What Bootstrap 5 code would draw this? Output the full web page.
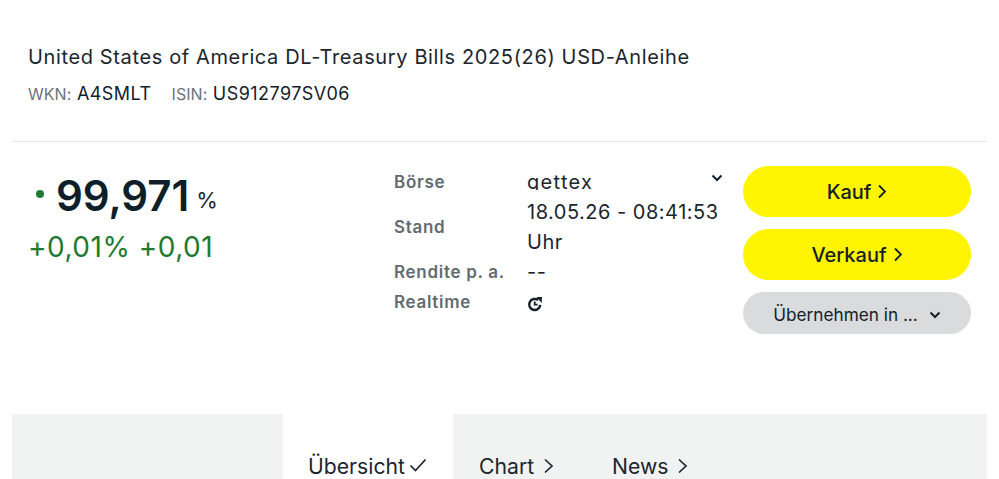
<!DOCTYPE html>
<html lang="de">
<head>
<meta charset="utf-8">
<title>USD-Anleihe</title>
<link href="https://cdn.jsdelivr.net/npm/bootstrap@5.3.0/dist/css/bootstrap.min.css" rel="stylesheet">
<style>
html,body{height:479px;overflow:hidden;background:#fff}
body{font-family:Inter,"Liberation Sans",sans-serif;color:#14212b;font-size:20px}
.shell{padding:0 12px}
.head{padding:43px 16px 0;height:142px;border-bottom:1px solid #e6e8e8}
.title{font-size:20px;line-height:28px;letter-spacing:.63px;margin:0;font-weight:400;color:#1c262d}
.ids{margin-top:10px;line-height:26px;font-size:18px;letter-spacing:.45px}
.ids .lbl{font-size:16px;color:#6d7478;letter-spacing:.05px}
.ids .pair{margin-right:20px}
.quote{height:272px}
.pricecol{width:382px;padding:34px 0 0 16px}
.pricerow{height:40px}
.dot{width:8px;height:8px;border-radius:50%;background:#217a2f;margin:0 12px 4px 8px}
.price{font-size:42px;font-weight:600;line-height:40px;letter-spacing:-.05px;color:#0f1f29}
.unit{font-size:22px;margin:8px 0 0 7px;color:#1c262d}
.delta{font-size:28px;line-height:36px;color:#217a2f;margin-top:13px;letter-spacing:.5px}
.metacol{width:349px;padding-top:25px}
.mrow{display:flex;align-items:center}
.mlabel{width:133px;font-size:17px;font-weight:600;color:#626b70;padding-top:2px;letter-spacing:.7px}
.mval{width:197px;font-size:20px;line-height:30px;color:#1c262d;letter-spacing:.5px}
.rb{height:30px}
.sel{height:23px;overflow:hidden;position:relative;align-self:flex-start;letter-spacing:1.3px}
.sel svg{position:absolute;right:1px;top:7px}
.rt{padding-top:3px}
.actions{width:228px;padding-top:24px}
.pill{display:flex;align-items:center;justify-content:center;border-radius:26px;border:0;width:100%;color:#14212b;padding:0}
.buy{height:51px;background:#fff500;font-size:20px;font-weight:500;margin-bottom:12px}
.buy svg{margin-left:6px}
.take{height:42px;background:#d9dbdd;font-size:17.2px;padding-top:3px}
.take svg{margin-left:11px}
.tabs{background:#f1f3f3;height:65px;padding-left:271px}
.tabon{width:170px;background:#fff;padding:37px 0 0 25px}
.tabitem{font-size:21.2px;line-height:30px;color:#1c262d}
.taboff{padding:37px 0 0 26px;width:133px}
.tabitem svg{margin-left:4px;vertical-align:2px}
.tabitem .gap8{margin-left:9px;vertical-align:0}
</style>
</head>
<body>
<div class="shell">
  <div class="head">
    <h1 class="title">United States of America DL-Treasury Bills 2025(26) USD-Anleihe</h1>
    <div class="ids"><span class="pair"><span class="lbl">WKN:</span> A4SMLT</span><span class="pair"><span class="lbl">ISIN:</span> US912797SV06</span></div>
  </div>
  <div class="quote d-flex">
    <div class="pricecol">
      <div class="pricerow d-flex align-items-center"><span class="dot"></span><span class="price">99,971</span><span class="unit">%</span></div>
      <div class="delta">+0,01% +0,01</div>
    </div>
    <div class="metacol">
      <div class="mrow rb"><div class="mlabel">Börse</div><div class="mval sel">gettex<svg width="12" height="8" viewBox="0 0 12 8"><path d="M1.5 1.5 6 6l4.5-4.5" fill="none" stroke="#14212b" stroke-width="2"/></svg></div></div>
      <div class="mrow"><div class="mlabel">Stand</div><div class="mval">18.05.26 - 08:41:53 Uhr</div></div>
      <div class="mrow rb"><div class="mlabel">Rendite p. a.</div><div class="mval">--</div></div>
      <div class="mrow rb"><div class="mlabel">Realtime</div><div class="mval rt d-flex align-items-center"><svg width="16" height="16" viewBox="0 0 16 16"><path d="M13.2 8.8a5.5 5.5 0 1 1-2.1-4.7" fill="none" stroke="#14212b" stroke-width="2.5"/><path d="M9.4 1 15 1l-.4 6z" fill="#14212b"/><path d="M7.7 5.4V8.7H10.6" fill="none" stroke="#14212b" stroke-width="1.8"/></svg></div></div>
    </div>
    <div class="actions">
      <button class="pill buy" type="button">Kauf<svg width="10" height="15" viewBox="0 0 10 15"><path d="M2 1.5 8 7.5l-6 6" fill="none" stroke="#14212b" stroke-width="1.8"/></svg></button>
      <button class="pill buy" type="button">Verkauf<svg width="10" height="15" viewBox="0 0 10 15"><path d="M2 1.5 8 7.5l-6 6" fill="none" stroke="#14212b" stroke-width="1.8"/></svg></button>
      <button class="pill take" type="button">Übernehmen in ...<svg width="12" height="8" viewBox="0 0 12 8"><path d="M1.5 1.5 6 6l4.5-4.5" fill="none" stroke="#14212b" stroke-width="2"/></svg></button>
    </div>
  </div>
  <div class="tabs d-flex">
    <div class="tabon tabitem">Übersicht<svg width="18" height="14" viewBox="0 0 18 14"><path d="M1.5 7.5 6.5 12.5 16.5 1.5" fill="none" stroke="#1c262d" stroke-width="1.7"/></svg></div>
    <div class="taboff tabitem">Chart<svg class="gap8" width="11" height="16" viewBox="0 0 11 16"><path d="M2 1.5 9 8l-7 6.5" fill="none" stroke="#1c262d" stroke-width="1.7"/></svg></div>
    <div class="taboff tabitem">News<svg class="gap8" width="11" height="16" viewBox="0 0 11 16"><path d="M2 1.5 9 8l-7 6.5" fill="none" stroke="#1c262d" stroke-width="1.7"/></svg></div>
  </div>
</div>
<script src="https://cdn.jsdelivr.net/npm/bootstrap@5.3.0/dist/js/bootstrap.bundle.min.js"></script>
</body>
</html>
